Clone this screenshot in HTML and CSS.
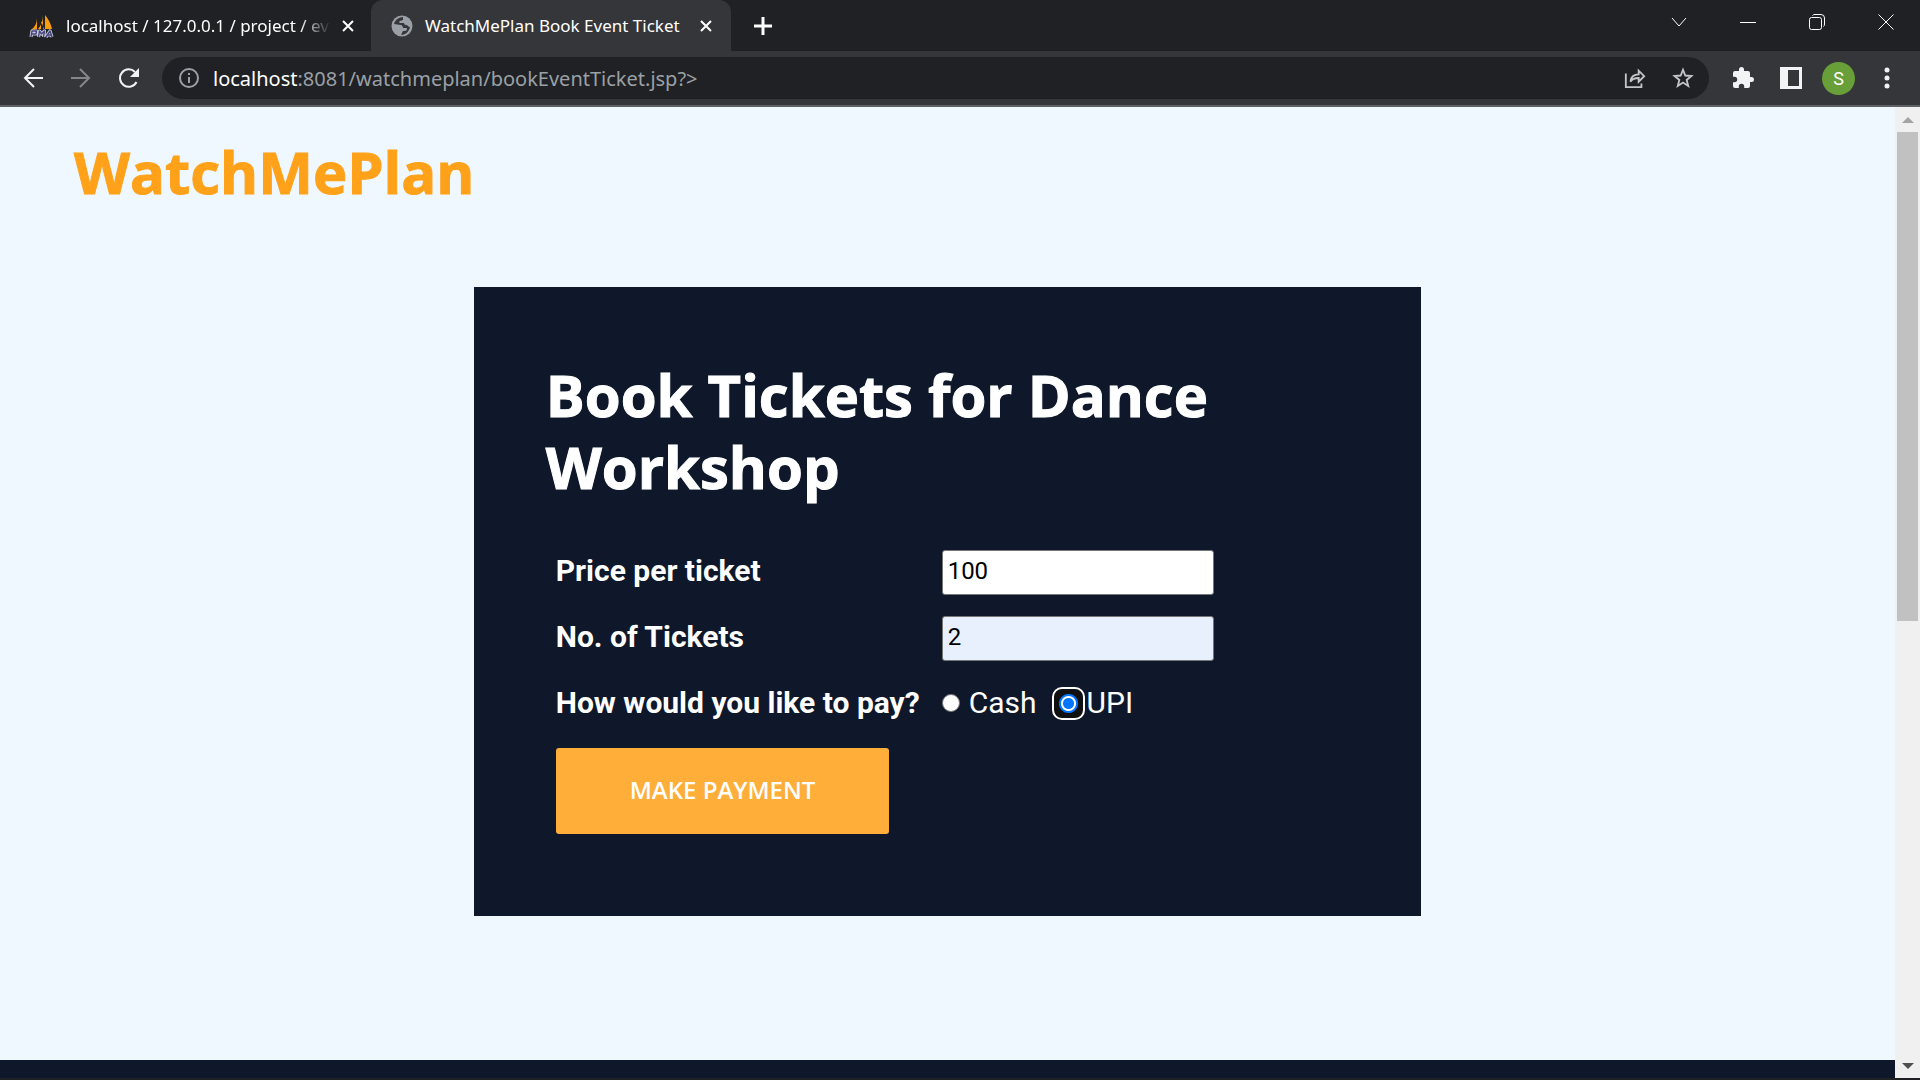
FILE: index.html
```html
<!DOCTYPE html>
<html lang="en">
<head>
<meta charset="utf-8">
<title>WatchMePlan Book Event Ticket</title>
<link rel="stylesheet" href="styles.css">
</head>
<body>
<header class="browser">
  <div class="tabstrip">
    <div class="tab">
      <svg class="favicon" viewBox="0 0 26 26" aria-hidden="true">
        <path fill="#f89c0e" d="M8 5c0 5-2 9-6 12l6-1zM14 1c0 6-1 10-5 15h5zM16 2c4 5 6 9 7 14h-7zM12 8l3 8h-3z"/>
        <g fill="none" stroke-linejoin="round">
          <path stroke="#c9c9dc" stroke-width="3.200" d="M2 24l1-6h4.500l-.5 3H3M9.500 24l1-6 2 3 3-3-1 6M17 24l4-6 2 6M18.500 22h4"/>
          <path stroke="#44457c" stroke-width="1.400" d="M2 24l1-6h4.500l-.5 3H3M9.500 24l1-6 2 3 3-3-1 6M17 24l4-6 2 6M18.500 22h4"/>
        </g>
      </svg>
      <span class="tab-title tab-title-faded">localhost / 127.0.0.1 / project / ev</span>
      <button class="icon-button" aria-label="Close tab"><svg class="icon-close" viewBox="0 0 14 14"><path d="M2 2l10 10M12 2L2 12"/></svg></button>
    </div>
    <div class="tab tab-active">
      <svg class="favicon-globe" viewBox="0 0 22 22" aria-hidden="true">
        <circle cx="11" cy="11" r="10.500" fill="#9aa0a6"/>
        <path fill="#35363a" d="M12 2c-4 0-8 3-9 7 2 0 4 1 7 1 1 0 2 2 2 3h3c2 0 1 3-1 3h-2c-1 1-1 3-2 4 4 0 8-3 9-8-2 0-2-2-4-2-1 0-2-1-2-2H9c-1 0-1-2 0-2l3-1z"/>
      </svg>
      <span class="tab-title">WatchMePlan Book Event Ticket</span>
      <button class="icon-button" aria-label="Close tab"><svg class="icon-close" viewBox="0 0 14 14"><path d="M2 2l10 10M12 2L2 12"/></svg></button>
    </div>
    <button class="icon-button new-tab" aria-label="New tab"><svg class="icon-plus" viewBox="0 0 18 18"><path d="M9 0v18M0 9h18"/></svg></button>
    <div class="window-controls">
      <button class="icon-button" aria-label="Search tabs"><svg class="icon-thin" viewBox="0 0 16 16"><path d="M1 4l7 8 7-8"/></svg></button>
      <button class="icon-button" aria-label="Minimize"><svg class="icon-thin" viewBox="0 0 16 16"><path d="M0 8.500h16"/></svg></button>
      <button class="icon-button" aria-label="Restore"><svg class="icon-thin" viewBox="0 0 16 16"><rect x=".5" y="3.500" width="12" height="12" rx="2"/><path d="M3.500 1.500Q4 .5 6 .5h6q3.500 0 3.500 3.500v6q0 2-1 2.500"/></svg></button>
      <button class="icon-button" aria-label="Close"><svg class="icon-thin" viewBox="0 0 16 16"><path d="M.5.5l15 15M15.500.5l-15 15"/></svg></button>
    </div>
  </div>
  <div class="toolbar">
    <button class="icon-button" aria-label="Back"><svg class="icon-nav" viewBox="0 0 20 20"><path d="M20 10H2M11 1l-9 9 9 9"/></svg></button>
    <button class="icon-button" aria-label="Forward"><svg class="icon-nav icon-dim" viewBox="0 0 20 20"><path d="M0 10h18M9 1l9 9-9 9"/></svg></button>
    <button class="icon-button" aria-label="Reload"><svg class="icon-nav" viewBox="0 0 20 20"><path d="M17.500 14A8.700 8.700 0 1 1 16 4"/><path class="solid" d="M20 0v9h-9z"/></svg></button>
    <div class="omnibox">
      <svg class="icon-info" viewBox="0 0 20 20" aria-hidden="true"><circle cx="10" cy="10" r="9"/><path d="M10 9v6M10 5v2"/></svg>
      <span class="url"><span class="url-host">localhost</span>:8081/watchmeplan/bookEventTicket.jsp?&gt;</span>
      <button class="icon-button" aria-label="Share"><svg class="icon-line" viewBox="0 0 24 24"><path d="M2 7v15h17v-4M7 16c.5-5 4-8 9-8V4l6 6-6 6v-4c-4 0-7 1-9 4z"/></svg></button>
      <button class="icon-button" aria-label="Bookmark"><svg class="icon-line" viewBox="0 0 24 24"><path d="M12 3l2.500 6.300 6.700.5-5.200 4.300 1.700 6.600L12 17l-5.700 3.700L8 14.100 2.800 9.800l6.700-.5z"/></svg></button>
    </div>
    <div class="toolbar-actions">
      <button class="icon-button" aria-label="Extensions"><svg class="icon-fill" viewBox="0 0 24 24"><path d="M20.500 11H19V7a2 2 0 0 0-2-2h-4V3.500a2.500 2.500 0 0 0-5 0V5H4a2 2 0 0 0-2 2v3.800h1.500a2.700 2.700 0 0 1 0 5.400H2V20a2 2 0 0 0 2 2h3.800v-1.500a2.700 2.700 0 0 1 5.400 0V22H17a2 2 0 0 0 2-2v-4h1.500a2.500 2.500 0 0 0 0-5z"/></svg></button>
      <button class="icon-button" aria-label="Side panel"><svg class="icon-fill" viewBox="0 0 24 24"><path fill-rule="evenodd" d="M1 1h22v22H1zM9 4v16h11V4z"/></svg></button>
      <button class="avatar" aria-label="Profile">S</button>
      <button class="icon-button" aria-label="Menu"><svg class="icon-fill" viewBox="0 0 24 24"><circle cx="12" cy="4" r="2.500"/><circle cx="12" cy="12" r="2.500"/><circle cx="12" cy="20" r="2.500"/></svg></button>
    </div>
  </div>
</header>
<div class="viewport">
  <div class="page">
    <a class="brand" href="#">WatchMePlan</a>
    <main class="card">
      <h1 class="card-title">Book Tickets for Dance Workshop</h1>
      <form class="booking">
        <label class="field-label" for="price">Price per ticket</label>
        <input class="field" id="price" type="text" value="100">
        <label class="field-label" for="count">No. of Tickets</label>
        <input class="field field-filled" id="count" type="text" value="2">
        <span class="field-label" id="pay-label">How would you like to pay?</span>
        <div class="options" role="radiogroup" aria-labelledby="pay-label">
          <input class="radio" type="radio" name="pay" id="cash"><label class="option-label" for="cash">Cash</label>
          <input class="radio radio-focused" type="radio" name="pay" id="upi" checked><label for="upi">UPI</label>
        </div>
        <button class="submit" type="button">MAKE PAYMENT</button>
      </form>
    </main>
    <footer class="footer"></footer>
  </div>
  <div class="scrollbar" aria-hidden="true">
    <svg class="scroll-arrow scroll-arrow-up" viewBox="0 0 12 6"><path d="M0 6l6-6 6 6z"/></svg>
    <div class="scroll-track"><div class="scroll-thumb"></div></div>
    <svg class="scroll-arrow" viewBox="0 0 12 6"><path d="M0 0l6 6 6-6z"/></svg>
  </div>
</div>
</body>
</html>
```

FILE: styles.css
```css
* { box-sizing: border-box; }

body {
  margin: 0;
  min-height: 100vh;
  display: flex;
  flex-direction: column;
  background: #202124;
  font-family: Roboto, "Liberation Sans", sans-serif;
}

button {
  margin: 0;
  padding: 0;
  border: 0;
  background: none;
  color: inherit;
  font: inherit;
}

svg { display: block; fill: none; stroke: none; }

/* Browser frame */
.browser {
  color: #fff;
  font-family: "Noto Sans", "Open Sans", sans-serif;
  border-bottom: 2px solid #606164;
}

.tabstrip { display: flex; align-items: center; height: 51px; }

.tab {
  display: flex;
  align-items: center;
  width: 371px;
  height: 51px;
  padding: 0 14px 0 29px;
  font-size: 17px;
  background: #202124;
}
.tab-active {
  width: 360px;
  padding: 0 16px 0 20px;
  background: #35363a;
  border-radius: 12px 12px 0 0;
}
.tab-title {
  flex: 1;
  white-space: nowrap;
  margin-right: 8px;
}
.tab-title-faded {
  -webkit-mask-image: linear-gradient(to right, #000 88%, transparent);
  mask-image: linear-gradient(to right, #000 88%, transparent);
}
.favicon { width: 26px; height: 26px; margin-right: 11px; }
.favicon-globe { width: 22px; height: 22px; margin-right: 12px; }

.icon-button {
  display: flex;
  align-items: center;
  justify-content: center;
  width: 18px;
  height: 24px;
  flex: none;
}
.icon-close { width: 14px; height: 14px; stroke: #fff; stroke-width: 2; }
.icon-plus { width: 18px; height: 18px; stroke: #fff; stroke-width: 3; }
.new-tab { margin-left: 23px; }

.window-controls { display: flex; gap: 51px; margin: 0 25px 8px auto; }
.icon-thin { width: 16px; height: 16px; stroke: #fff; stroke-width: 1; }

.toolbar {
  display: flex;
  align-items: center;
  height: 54px;
  padding: 0 17px 0 22px;
  gap: 26px;
  background: #35363a;
}
.toolbar .icon-button { width: 22px; }
.icon-nav { width: 20px; height: 20px; stroke: #f1f3f4; stroke-width: 2; }
.icon-dim { stroke: #85868a; }
.solid { fill: #f1f3f4; stroke: none; }

.omnibox {
  flex: 1;
  display: flex;
  align-items: center;
  height: 42px;
  margin-left: -4px;
  padding: 0 15px 0 17px;
  gap: 26px;
  border-radius: 21px;
  background: #202124;
}
.icon-info { width: 20px; height: 20px; margin-right: -12px; stroke: #9aa0a6; stroke-width: 2; }
.url { flex: 1; font-size: 20px; color: #9aa0a6; white-space: nowrap; }
.url-host { color: #fff; }
.icon-line { width: 24px; height: 24px; stroke: #c3c5c8; stroke-width: 2; }

.toolbar-actions { display: flex; align-items: center; gap: 15px; margin-left: -9px; }
.toolbar-actions .icon-button { width: 33px; }
.icon-fill { width: 24px; height: 24px; fill: #f1f3f4; }
.avatar {
  width: 33px;
  height: 33px;
  border-radius: 50%;
  background: #689f38;
  font-family: Roboto, sans-serif;
  font-size: 18px;
}

/* Page area */
.viewport {
  flex: 1;
  display: flex;
  border-bottom: 2px solid #202124;
}
.page {
  flex: 1;
  display: flex;
  flex-direction: column;
  background: #f0f8ff;
}
.brand,
.card-title {
  font-family: "Open Sans", sans-serif;
  font-size: 58px;
  font-weight: 700;
  line-height: 72px;
  -webkit-text-stroke: 1px currentColor;
}
.brand {
  align-self: flex-start;
  margin: 29px 0 0 74px;
  color: #ffa21a;
  text-decoration: none;
}
.card {
  width: 50%;
  margin: 79px auto 144px;
  padding: 72px 72px 82px;
  background: #0e182a;
  color: #fff;
}
.card-title { margin: 0 0 47px; }
.booking {
  display: grid;
  grid-template-columns: max-content 272px;
  grid-template-rows: 45px 45px 45px auto;
  gap: 21px 22px;
  align-items: start;
  padding-left: 10px;
  font-size: 30px;
  line-height: 42px;
}
.field-label { font-weight: 700; }
.field {
  width: 100%;
  height: 45px;
  padding: 0 5px 4px;
  border: 1px solid #767676;
  border-radius: 3px;
  background: #fff;
  color: #000;
  font-family: inherit;
  font-size: 24px;
}
.field-filled { background: #e8f0fe; }
.options { display: flex; align-items: center; }
.option-label { margin: 0 15px 0 9px; }
.radio {
  appearance: none;
  width: 18px;
  height: 18px;
  margin: 0;
  border: 1px solid #767676;
  border-radius: 50%;
  background: #fff;
}
.radio-focused {
  width: 33px;
  height: 33px;
  margin-right: 2px;
  border: 2px solid #fff;
  border-radius: 10px;
  background: radial-gradient(circle, #0075ff 5px, #fff 6px, #fff 7px, #0075ff 8px, #0075ff 9px, #101010 10px);
}
.submit {
  justify-self: start;
  grid-column: 1 / -1;
  padding: 24px 74px 26px;
  border-radius: 3px;
  background: #ffae3a;
  color: #fff;
  font-family: "Open Sans", sans-serif;
  font-size: 24px;
  font-weight: 600;
  line-height: 36px;
}
.footer { flex: 1; min-height: 18px; background: #0e182a; }

/* Scrollbar */
.scrollbar {
  display: flex;
  flex-direction: column;
  align-items: center;
  width: 25px;
  background: #f0f0f0;
}
.scroll-arrow { width: 12px; height: 6px; margin: 9px 0; fill: #505050; }
.scroll-arrow-up { margin-top: 10px; fill: #a3a3a3; }
.scroll-track { flex: 1; align-self: stretch; padding: 0 2px; }
.scroll-thumb { height: 53%; background: #c1c1c1; }
```
